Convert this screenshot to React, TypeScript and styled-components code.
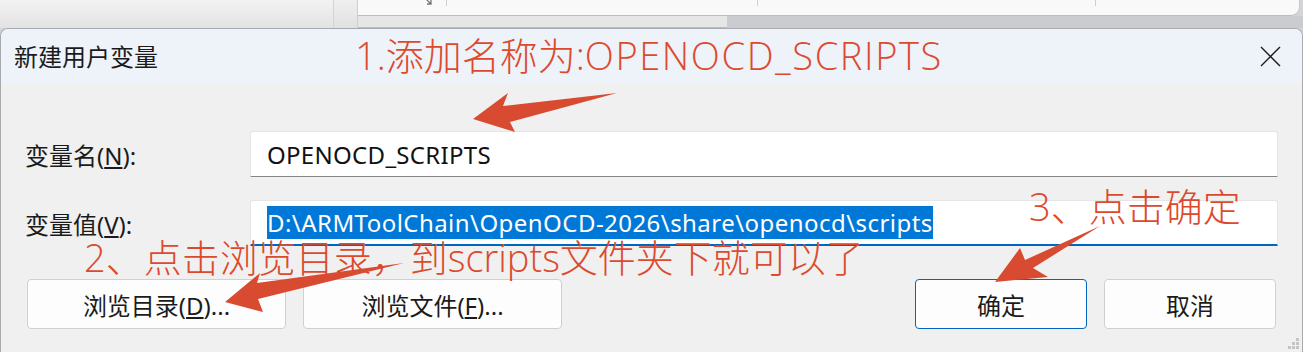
import React from "react";
import styled, { createGlobalStyle } from "styled-components";

const Global = createGlobalStyle`
  html, body { margin: 0; padding: 0; }
  body {
    background: #d3d4d7;
    font-family: "Noto Sans", "Noto Sans CJK SC", sans-serif;
  }
`;

const Screen = styled.div`
  position: relative;
  width: 1303px;
  height: 352px;
  overflow: hidden;
  display: flex;
  flex-direction: column;
  background: #d3d4d7;
`;

/* ---------- background window (partly visible) ---------- */
const BackWindow = styled.div`
  height: 28px;
  flex-shrink: 0;
  display: flex;
`;
const BackSidebar = styled.div`
  width: 333px;
  background: linear-gradient(#f2f2f2, #e3e3e3);
  border-right: 1px solid #d4d4d4;
`;
const BackGutter = styled.div`
  width: 23px;
  background: linear-gradient(#efefef, #e1e1e1);
  border-right: 1px solid #cfcfcf;
`;
const BackMain = styled.div`
  flex: 1;
  display: flex;
  flex-direction: column;
`;
const BackTable = styled.div`
  height: 15px;
  margin-right: 3px;
  display: flex;
  align-items: flex-start;
  background: #f9f9f9;
  border-bottom: 1px solid #bdbdbd;
  border-right: 1px solid #c8c8c8;
  border-radius: 0 0 9px 0;
`;
const BackCell = styled.div<{ $w: number }>`
  width: ${(p) => p.$w}px;
  height: 6px;
  border-right: 1px solid #cfcfcf;
  display: flex;
  justify-content: flex-end;
  padding-right: 13px;
  box-sizing: border-box;
`;
const BackScroll = styled.div`
  flex: 1;
  display: flex;
`;
const ScrollThumb = styled.div`
  width: 369px;
  background: #e6e6e6;
  border-bottom: 1px solid #bcbcbc;
`;
const ScrollTrack = styled.div`
  flex: 1;
  background: #cbccd0;
`;

/* ---------- dialog ---------- */
const Dialog = styled.div`
  flex: 1;
  display: flex;
  flex-direction: column;
  background: #f0f0f0;
  border: 1px solid #a8aaae;
  border-bottom: none;
  border-radius: 8px 8px 0 0;
  overflow: hidden;
`;
const TitleBar = styled.div`
  height: 55px;
  flex-shrink: 0;
  display: flex;
  align-items: center;
  justify-content: space-between;
  padding: 0 20px 0 13px;
  background: #eef2f9;
`;
const Title = styled.span`
  font-size: 24px;
  color: #1b1b1b;
  margin-top: -3px;
`;
const CloseIcon = styled.svg`
  width: 23px;
  height: 23px;
`;
const Body = styled.div`
  flex: 1;
  display: flex;
  flex-direction: column;
  padding: 47px 24px 0 24px;
`;
const FieldRow = styled.div<{ $gap: number }>`
  display: flex;
  align-items: center;
  height: 46px;
  margin-top: ${(p) => p.$gap}px;
`;
const Label = styled.label`
  width: 225px;
  font-size: 24px;
  color: #1b1b1b;
`;
const Input = styled.div<{ $focused?: boolean }>`
  flex: 1;
  height: 100%;
  box-sizing: border-box;
  display: flex;
  align-items: center;
  padding-left: 16px;
  background: #ffffff;
  border: 1px solid #e5e5e5;
  border-bottom: ${(p) => (p.$focused ? "2px solid #0067c0" : "1px solid #878787")};
  border-radius: 3px 3px 0 0;
  font-size: 24px;
  letter-spacing: 0.3px;
  color: #111;
  white-space: nowrap;
`;
const Selected = styled.span`
  background: #0078d7;
  color: #ffffff;
  line-height: 33px;
  letter-spacing: 0.45px;
`;
const ButtonRow = styled.div`
  display: flex;
  gap: 17px;
  margin-top: 33px;
  padding: 0 2px;
`;
const Button = styled.button<{ $w: number; $primary?: boolean }>`
  width: ${(p) => p.$w}px;
  height: 50px;
  background: #fdfdfd;
  border: 1px solid ${(p) => (p.$primary ? "#0067c0" : "#d0d0d0")};
  border-radius: 4px;
  font-family: "Noto Sans", "Noto Sans CJK SC", sans-serif;
  font-size: 24px;
  color: #1b1b1b;
  padding: 0;
`;
const Spacer = styled.div`
  flex: 1;
`;
const Grip = styled.svg`
  position: absolute;
  right: 3px;
  bottom: 2px;
  width: 12px;
  height: 12px;
`;

/* ---------- red annotations ---------- */
const Note = styled.div<{ $x: number; $y: number }>`
  position: absolute;
  left: ${(p) => p.$x}px;
  top: ${(p) => p.$y}px;
  font-family: "Open Sans", "Noto Sans CJK SC", sans-serif;
  font-weight: 300;
  font-size: 38px;
  line-height: 1;
  color: #dc4a2e;
  white-space: nowrap;
`;
const Latin = styled.span`
  letter-spacing: 1.6px;
`;
const ArrowLayer = styled.svg`
  position: absolute;
  left: 0;
  top: 0;
  width: 1303px;
  height: 352px;
  pointer-events: none;
`;

export default function App() {
  return (
    <Screen>
      <Global />
      <BackWindow>
        <BackSidebar />
        <BackGutter />
        <BackMain>
          <BackTable>
            <BackCell $w={89}>
              <svg width="10" height="6" viewBox="0 0 10 6">
                <path d="M1 -3 L8 4 M8 0 L8 4 L4 4" stroke="#777" strokeWidth="1.3" fill="none" />
              </svg>
            </BackCell>
            <BackCell $w={311} />
            <BackCell $w={338} />
          </BackTable>
          <BackScroll>
            <ScrollThumb />
            <ScrollTrack />
          </BackScroll>
        </BackMain>
      </BackWindow>

      <Dialog>
        <TitleBar>
          <Title>新建用户变量</Title>
          <CloseIcon viewBox="0 0 23 23">
            <path d="M2 2 L21 21 M21 2 L2 21" stroke="#1b1b1b" strokeWidth="1.4" fill="none" />
          </CloseIcon>
        </TitleBar>
        <Body>
          <FieldRow $gap={0}>
            <Label>
              变量名(<u>N</u>):
            </Label>
            <Input>OPENOCD_SCRIPTS</Input>
          </FieldRow>
          <FieldRow $gap={23}>
            <Label>
              变量值(<u>V</u>):
            </Label>
            <Input $focused>
              <Selected>D:\ARMToolChain\OpenOCD-2026\share\openocd\scripts</Selected>
            </Input>
          </FieldRow>
          <ButtonRow>
            <Button $w={259}>
              浏览目录(<u>D</u>)...
            </Button>
            <Button $w={259}>
              浏览文件(<u>F</u>)...
            </Button>
            <Spacer />
            <Button $w={172} $primary>
              确定
            </Button>
            <Button $w={172}>取消</Button>
          </ButtonRow>
        </Body>
      </Dialog>

      <Grip viewBox="0 0 12 12">
        <rect x="8" y="0" width="3" height="3" fill="#c4c4c4" />
        <rect x="4" y="4" width="3" height="3" fill="#c4c4c4" />
        <rect x="8" y="4" width="3" height="3" fill="#c4c4c4" />
        <rect x="0" y="8" width="3" height="3" fill="#c4c4c4" />
        <rect x="4" y="8" width="3" height="3" fill="#c4c4c4" />
        <rect x="8" y="8" width="3" height="3" fill="#c4c4c4" />
      </Grip>

      <Note $x={355} $y={36}>
        1.添加名称为:<Latin>OPENOCD_SCRIPTS</Latin>
      </Note>
      <Note $x={84} $y={238}>
        2、点击浏览目录，到scripts文件夹下就可以了
      </Note>
      <Note $x={1029} $y={187}>
        3、点击确定
      </Note>

      <ArrowLayer viewBox="0 0 1303 352">
        <polygon points="473,119 508,93 503,106 617,93 510,122 515,132" fill="#d84b30" />
        <polygon points="225,302 260,273 257,283 404,263 258,299 263,312" fill="#d84b30" />
        <polygon points="995,282 1020,248 1025,260 1100,226 1033,268 1048,277" fill="#d84b30" />
      </ArrowLayer>
    </Screen>
  );
}
